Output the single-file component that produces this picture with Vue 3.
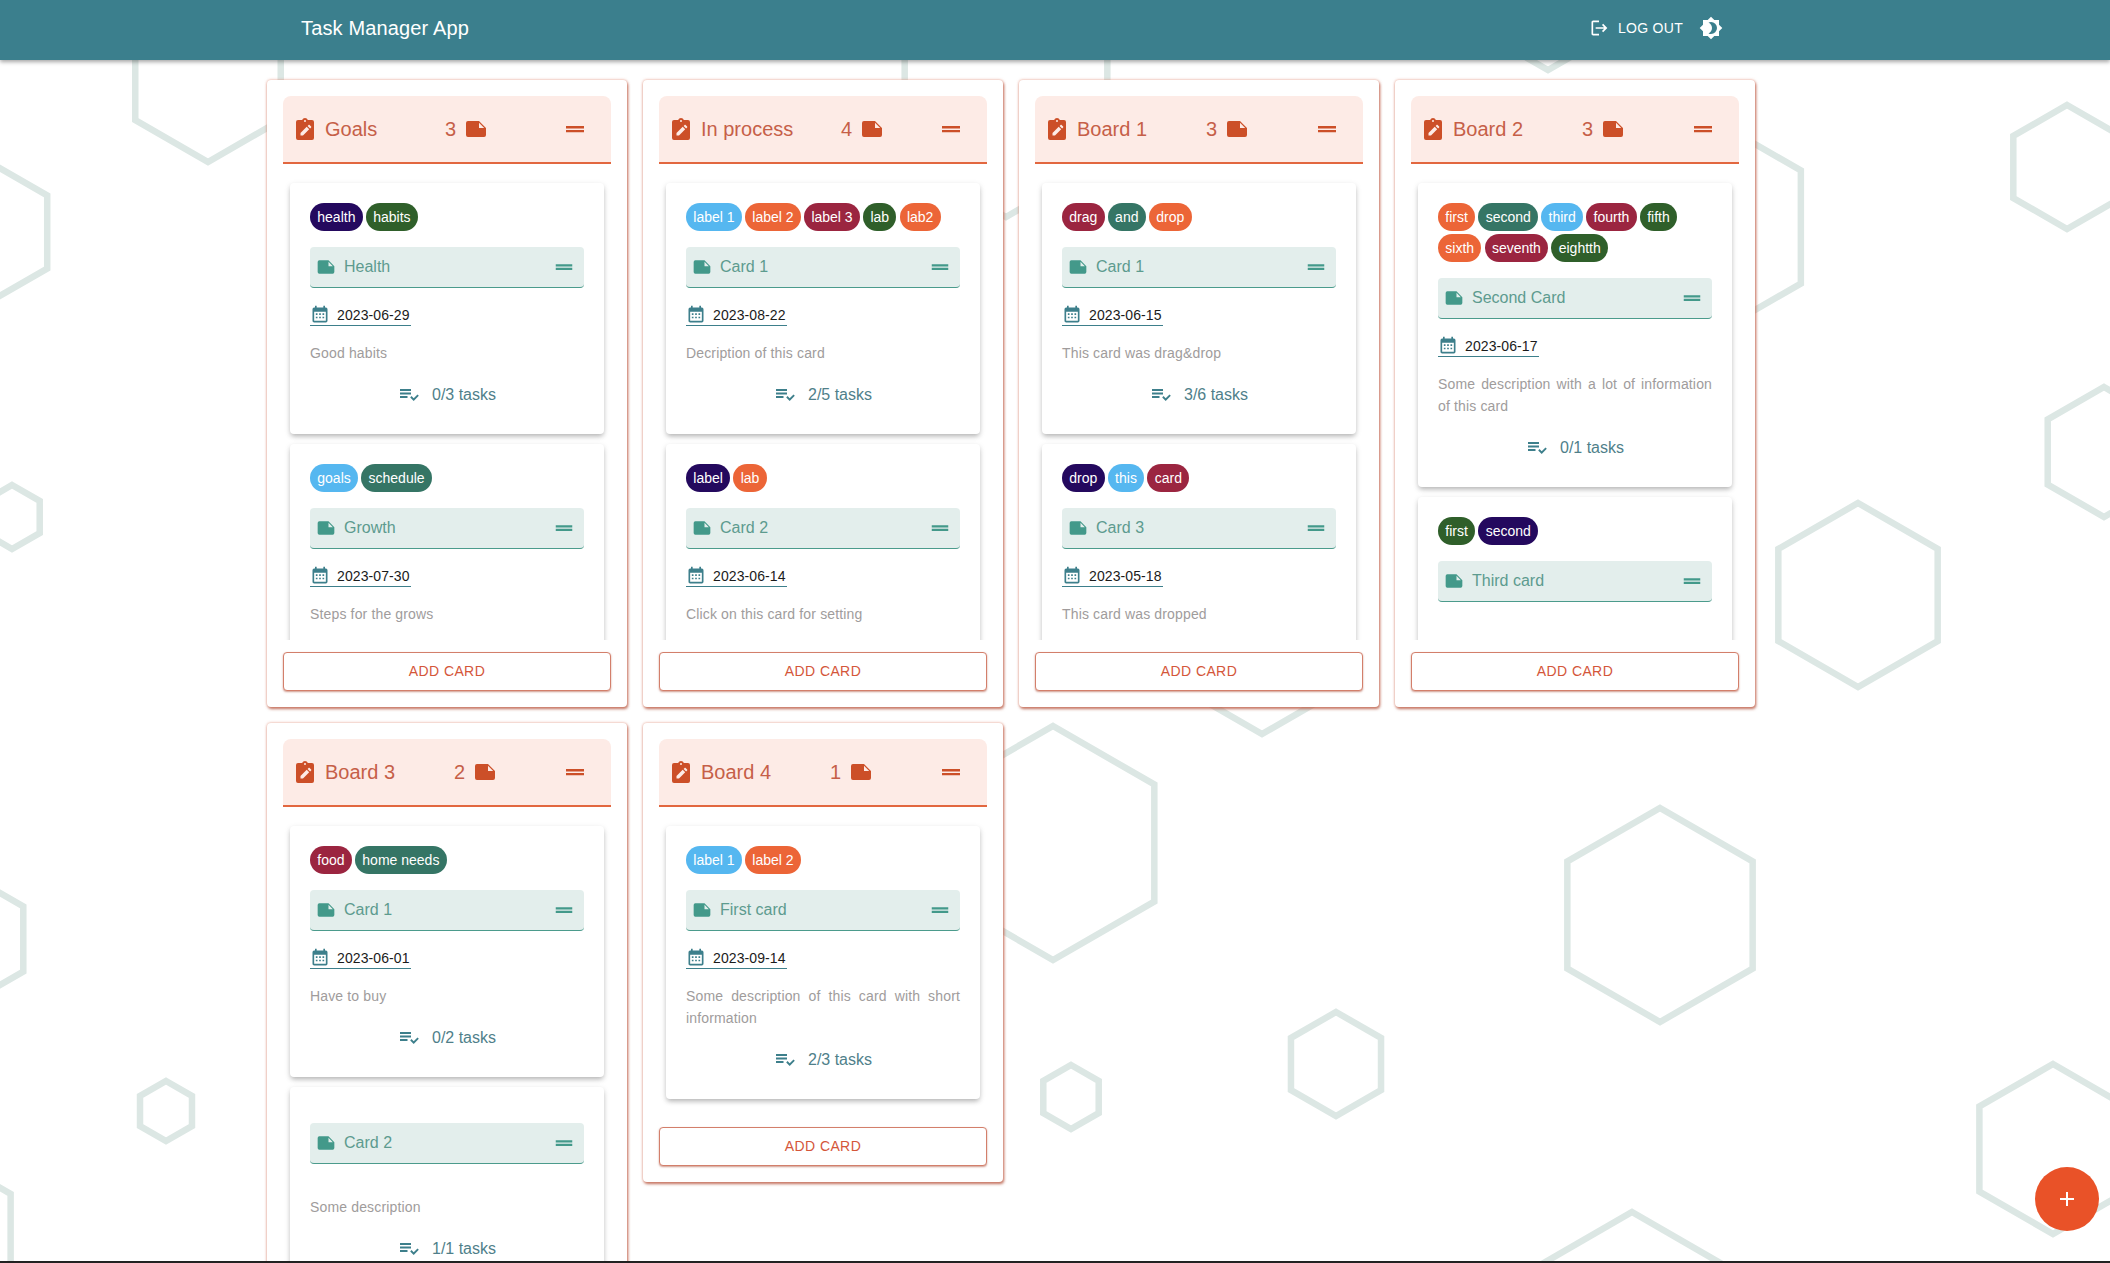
<template>
  <div class="page">
    <svg class="hexes" width="2110" height="1263">
      <polygon v-for="(h, i) in hexes" :key="i" :points="hexPoints(h)" />
    </svg>

    <header class="topbar">
      <div class="app-title">Task Manager App</div>
      <div class="top-actions">
        <button class="logout" type="button">
          <svg width="20" height="20" viewBox="0 0 24 24"><path :d="icons.logout" /></svg>
          <span>Log out</span>
        </button>
        <svg class="theme" width="24" height="24" viewBox="0 0 24 24"><path :d="icons.theme" /></svg>
      </div>
    </header>

    <main class="boards">
      <section v-for="board in boards" :key="board.title" class="board">
        <div class="board-head">
          <div class="board-name">
            <svg width="24" height="24" viewBox="0 0 24 24"><path fill-rule="evenodd" :d="icons.clipboard" /></svg>
            <span>{{ board.title }}</span>
          </div>
          <div class="board-count">
            <span>{{ board.count }}</span>
            <svg width="24" height="24" viewBox="0 0 24 24"><path fill-rule="evenodd" :d="icons.note" /></svg>
          </div>
          <svg width="24" height="24" viewBox="0 0 24 24"><path :d="icons.handle" /></svg>
        </div>

        <div class="card-list">
          <article v-for="card in board.cards" :key="card.title" class="card">
            <div class="chips">
              <span v-for="chip in card.labels" :key="chip[0]" class="chip" :class="chip[1]">{{ chip[0] }}</span>
            </div>
            <div class="card-title">
              <svg class="note" width="20" height="20" viewBox="0 0 24 24"><path fill-rule="evenodd" :d="icons.note" /></svg>
              <span>{{ card.title }}</span>
              <svg class="handle" width="22" height="22" viewBox="0 0 24 24"><path :d="icons.handle" /></svg>
            </div>
            <div class="date-wrap">
              <div v-if="card.date" class="date">
                <svg width="20" height="20" viewBox="0 0 24 24"><path :d="icons.calendar" /></svg>
                <span>{{ card.date }}</span>
              </div>
            </div>
            <p v-if="card.text" class="desc">{{ card.text }}</p>
            <div v-if="card.tasks" class="tasks">
              <svg width="19" height="12" viewBox="0 0 19 12">
                <path d="M0 0h11v2H0zM0 3.4h11v2H0zM0 7h7.5v2H0z" />
                <path d="M10.2 8.4l1.3-1.3 2.2 2.2 3.8-3.8 1.3 1.3-5.1 5.2z" />
              </svg>
              <span>{{ card.tasks }}</span>
            </div>
          </article>
        </div>

        <button class="add-card" type="button">Add card</button>
      </section>
    </main>

    <button class="fab" type="button">
      <svg width="16" height="16" viewBox="0 0 16 16"><path d="M7 1h2v6h6v2H9v6H7V9H1V7h6z" /></svg>
    </button>
    <div class="bottom-edge"></div>
  </div>
</template>

<script setup>
const icons = {
  logout: 'M17 7l-1.41 1.41L18.17 11H8v2h10.17l-2.58 2.58L17 17l5-5zM5 5h7V3H5c-1.1 0-2 .9-2 2v14c0 1.1.9 2 2 2h7v-2H5V5z',
  theme: 'M12,18C11.11,18 10.26,17.8 9.5,17.45C11.56,16.5 13,14.42 13,12C13,9.58 11.56,7.5 9.5,6.55C10.26,6.2 11.11,6 12,6A6,6 0 0,1 18,12A6,6 0 0,1 12,18M20,8.69V4H15.31L12,0.69L8.69,4H4V8.69L0.69,12L4,15.31V20H8.69L12,23.31L15.31,20H20V15.31L23.31,12L20,8.69Z',
  clipboard: 'M19 3h-4.2C14.4 1.8 13.3 1 12 1s-2.4.8-2.8 2H5a2 2 0 0 0-2 2v16a2 2 0 0 0 2 2h14a2 2 0 0 0 2-2V5a2 2 0 0 0-2-2zM12 3a1 1 0 1 1 0 2 1 1 0 0 1 0-2zM7.5 18.5V16l6.2-6.2 2.5 2.5-6.2 6.2zM14.6 8.9l1-1c.3-.3.7-.3 1 0l1.5 1.5c.3.3.3.7 0 1l-1 1z',
  note: 'M4 4h11l7 7v7a2 2 0 0 1-2 2H4a2 2 0 0 1-2-2V6a2 2 0 0 1 2-2zM15 5.8V11h5.2z',
  handle: 'M21 11.4H3V9H21zM21 12.9H3V15.3H21z',
  calendar: 'M9,10V12H7V10H9M13,10V12H11V10H13M17,10V12H15V10H17M19,3A2,2 0 0,1 21,5V19A2,2 0 0,1 19,21H5C3.89,21 3,20.1 3,19V5A2,2 0 0,1 5,3H6V1H8V3H16V1H18V3H19M19,19V8H5V19H19M9,14V16H7V14H9M13,14V16H11V14H13M17,14V16H15V14H17Z'
}

// background decoration: [center x, center y, radius]
const hexes = [
  [208, 78, 84], [-16, 232, 73], [12, 517, 32], [-33, 939, 65], [166, 1111, 30], [-50, 1229, 70],
  [1006, 100, 117], [1262, 654, 80], [1548, 30, 40], [1703, 227, 113], [2067, 167, 62],
  [2104, 452, 65], [1858, 595, 92], [1053, 843, 117], [1660, 915, 107], [1336, 1064, 52],
  [1071, 1097, 32], [2053, 1149, 85], [1632, 1322, 110]
]

const hexPoints = ([x, y, r]) => {
  const w = r * 0.866
  return [
    [x, y - r], [x + w, y - r / 2], [x + w, y + r / 2],
    [x, y + r], [x - w, y + r / 2], [x - w, y - r / 2]
  ].map((p) => p.join(',')).join(' ')
}

const boards = [
  {
    title: 'Goals',
    count: 3,
    cards: [
      { title: 'Health', labels: [['health', 'navy'], ['habits', 'green']], date: '2023-06-29', text: 'Good habits', tasks: '0/3 tasks' },
      { title: 'Growth', labels: [['goals', 'blue'], ['schedule', 'teal']], date: '2023-07-30', text: 'Steps for the grows' }
    ]
  },
  {
    title: 'In process',
    count: 4,
    cards: [
      { title: 'Card 1', labels: [['label 1', 'blue'], ['label 2', 'orange'], ['label 3', 'maroon'], ['lab', 'green'], ['lab2', 'orange']], date: '2023-08-22', text: 'Decription of this card', tasks: '2/5 tasks' },
      { title: 'Card 2', labels: [['label', 'navy'], ['lab', 'orange']], date: '2023-06-14', text: 'Click on this card for setting' }
    ]
  },
  {
    title: 'Board 1',
    count: 3,
    cards: [
      { title: 'Card 1', labels: [['drag', 'maroon'], ['and', 'teal'], ['drop', 'orange']], date: '2023-06-15', text: 'This card was drag&drop', tasks: '3/6 tasks' },
      { title: 'Card 3', labels: [['drop', 'navy'], ['this', 'blue'], ['card', 'maroon']], date: '2023-05-18', text: 'This card was dropped' }
    ]
  },
  {
    title: 'Board 2',
    count: 3,
    cards: [
      {
        title: 'Second Card',
        labels: [['first', 'orange'], ['second', 'teal'], ['third', 'blue'], ['fourth', 'maroon'], ['fifth', 'green'], ['sixth', 'orange'], ['seventh', 'maroon'], ['eightth', 'green']],
        date: '2023-06-17',
        text: 'Some description with a lot of information of this card',
        tasks: '0/1 tasks'
      },
      { title: 'Third card', labels: [['first', 'green'], ['second', 'navy']] }
    ]
  },
  {
    title: 'Board 3',
    count: 2,
    cards: [
      { title: 'Card 1', labels: [['food', 'maroon'], ['home needs', 'teal']], date: '2023-06-01', text: 'Have to buy', tasks: '0/2 tasks' },
      { title: 'Card 2', labels: [], text: 'Some description', tasks: '1/1 tasks' }
    ]
  },
  {
    title: 'Board 4',
    count: 1,
    cards: [
      { title: 'First card', labels: [['label 1', 'blue'], ['label 2', 'orange']], date: '2023-09-14', text: 'Some description of this card with short information', tasks: '2/3 tasks' }
    ]
  }
]
</script>

<style scoped>
.page {
  position: relative;
  height: 100vh;
  overflow: hidden;
  background: #fff;
  font-family: "Liberation Sans", Arial, sans-serif;
}

.hexes {
  position: absolute;
  top: 0;
  left: 0;
}

.hexes polygon {
  fill: none;
  stroke: #dce7e4;
  stroke-width: 6.5;
}

.topbar {
  position: relative;
  z-index: 2;
  box-sizing: border-box;
  display: flex;
  align-items: center;
  justify-content: space-between;
  height: 60px;
  padding: 0 387px 4px 301px;
  background: #3b7f8d;
  box-shadow: 0 2px 4px rgba(0, 0, 0, 0.35);
  color: #fff;
}

.app-title {
  font-size: 20px;
  letter-spacing: 0.15px;
}

.top-actions {
  display: flex;
  align-items: center;
  gap: 16px;
}

.logout {
  display: flex;
  align-items: center;
  gap: 9px;
  padding: 0;
  border: 0;
  background: none;
  color: #fff;
  font: inherit;
  font-size: 14px;
  letter-spacing: 0.3px;
  text-transform: uppercase;
}

.topbar svg {
  display: block;
  fill: #fff;
}

.boards {
  position: relative;
  z-index: 1;
  display: flex;
  flex-wrap: wrap;
  align-items: flex-start;
  gap: 16px;
  width: 1504px;
  margin-left: 267px;
  padding-top: 20px;
}

.board {
  box-sizing: border-box;
  width: 360px;
  padding: 16px;
  border-radius: 4px;
  background: #fff;
  box-shadow: 0 0 3px rgba(224, 130, 105, 0.75), 1px 2px 3px rgba(170, 70, 45, 0.75);
}

.board-head {
  box-sizing: border-box;
  display: flex;
  align-items: center;
  justify-content: space-between;
  height: 68px;
  padding: 0 24px 0 10px;
  border-bottom: 2px solid #e2673f;
  border-radius: 8px 8px 0 0;
  background: #fdebe6;
  color: #c65f48;
  font-size: 20px;
}

.board-head svg {
  display: block;
  fill: #cc4f28;
}

.board-name,
.board-count {
  display: flex;
  align-items: center;
}

.board-name {
  gap: 8px;
}

.board-count {
  gap: 8px;
  padding-right: 7px;
}

.card-list {
  max-height: 457px;
  overflow: hidden;
  padding: 19px 7px 0;
}

.board:last-child .card-list {
  padding-bottom: 6px;
}

.card {
  margin-bottom: 10px;
  padding: 20px 20px 27.6px;
  border-radius: 4px;
  background: #fff;
  box-shadow: 0 3px 5px -1px rgba(0, 0, 0, 0.22), 0 2px 6px rgba(0, 0, 0, 0.12);
}

.chips {
  display: flex;
  flex-wrap: wrap;
  gap: 3px 3.2px;
  margin-bottom: 16px;
}

.chip {
  height: 28px;
  padding: 0 7.3px;
  border-radius: 14px;
  color: #fff;
  font-size: 14px;
  line-height: 28px;
}

.navy { background: #24095e; }
.green { background: #2f5f2a; }
.blue { background: #55b7f0; }
.teal { background: #357565; }
.orange { background: #ec6537; }
.maroon { background: #9b2540; }

.card-title {
  box-sizing: border-box;
  display: flex;
  align-items: center;
  height: 41px;
  padding: 0 8px 0 6px;
  border-bottom: 1.5px solid #4b9b8c;
  border-radius: 4px;
  background: #e3eeec;
  color: #5d9b8f;
  font-size: 16px;
}

.card-title svg {
  display: block;
  fill: #43998a;
}

.card-title .note {
  margin-right: 8px;
}

.card-title .handle {
  margin-left: auto;
  margin-right: 1px;
}

.date-wrap {
  padding: 16px 0;
}

.date {
  box-sizing: border-box;
  display: flex;
  align-items: center;
  gap: 7px;
  width: 101px;
  height: 22px;
  border-bottom: 1px solid #3d7f8b;
  color: #1b1b1b;
  font-size: 14px;
  letter-spacing: 0.1px;
}

.date svg {
  display: block;
  flex: none;
  fill: #3d7f8b;
}

.desc {
  margin: 0;
  color: #a09c9c;
  font-size: 14px;
  letter-spacing: 0.15px;
  line-height: 22px;
  text-align: justify;
}

.tasks {
  display: flex;
  align-items: center;
  justify-content: center;
  gap: 13px;
  height: 24px;
  margin-top: 18.6px;
  padding-left: 2px;
  color: #4f7f8a;
  font-size: 16px;
}

.tasks svg {
  display: block;
  fill: #3d7f8b;
}

.add-card {
  box-sizing: border-box;
  display: block;
  width: 100%;
  height: 39px;
  margin-top: 12px;
  padding: 0 0 2px;
  border: 1px solid #d37f6b;
  border-radius: 4px;
  background: #fff;
  box-shadow: 0 1px 2px rgba(170, 70, 45, 0.55);
  color: #d4563a;
  font: inherit;
  font-size: 14px;
  letter-spacing: 0.4px;
  text-transform: uppercase;
}

.fab {
  position: absolute;
  top: 1167px;
  left: 2035px;
  z-index: 3;
  display: flex;
  align-items: center;
  justify-content: center;
  width: 64px;
  height: 64px;
  padding: 0;
  border: 0;
  border-radius: 50%;
  background: #e95228;
}

.fab svg {
  fill: #fff;
}

.bottom-edge {
  position: absolute;
  right: 0;
  bottom: 0;
  left: 0;
  z-index: 4;
  height: 2px;
  background: #222;
}
</style>

<style>
body {
  margin: 0;
}
</style>
